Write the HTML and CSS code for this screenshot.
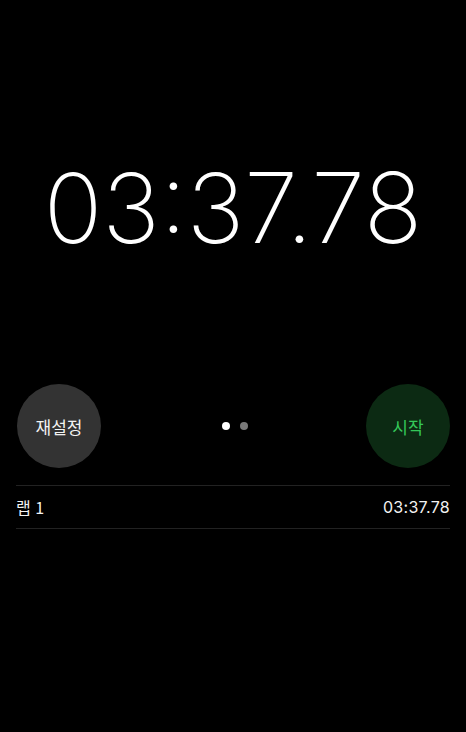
FILE: index.html
```html
<!DOCTYPE html>
<html lang="ko">
<head>
<meta charset="utf-8">
<link rel="stylesheet" href="styles.css">
</head>
<body>
<div class="screen">
  <div class="clock">03:37.78</div>
  <div class="controls">
    <div class="btn btn-reset"><span>재설정</span></div>
    <div class="dots"><span class="dot on"></span><span class="dot"></span></div>
    <div class="btn btn-start"><span>시작</span></div>
  </div>
  <div class="laps">
    <div class="lap"><span class="lap-name">랩 1</span><span class="lap-time">03:37.78</span></div>
  </div>
</div>
</body>
</html>
```
FILE: styles.css
```css
html, body {
  margin: 0;
  padding: 0;
  background: #000;
}
body {
  width: 466px;
  height: 732px;
  overflow: hidden;
  font-family: Inter, "Noto Sans CJK KR", sans-serif;
  color: #fff;
}
.screen {
  display: flex;
  flex-direction: column;
  padding: 0 16px;
}
.clock {
  display: flex;
  justify-content: center;
  font-family: Inter, sans-serif;
  font-weight: 200;
  font-size: 97px;
  letter-spacing: 0;
  line-height: 0;
  padding-top: 208px;
  margin-bottom: 176px;
}
.controls {
  display: flex;
  align-items: center;
  justify-content: space-between;
  margin-left: 1px;
  height: 84px;
}
.btn {
  width: 84px;
  height: 84px;
  border-radius: 50%;
  display: flex;
  align-items: center;
  justify-content: center;
  font-family: "Noto Sans CJK KR", sans-serif;
  font-size: 17px;
}
.btn-reset {
  background: #333333;
  color: #f2f2f2;
}
.btn-start {
  background: #0c2a13;
  color: #34c759;
}
.dots {
  display: flex;
  gap: 10px;
  margin-left: 2px;
}
.dot {
  width: 8px;
  height: 8px;
  border-radius: 50%;
  background: #7a7a7a;
}
.dot.on {
  background: #fff;
}
.laps {
  margin-top: 17px;
  border-top: 1px solid #222;
}
.lap {
  height: 42px;
  display: flex;
  align-items: center;
  justify-content: space-between;
  border-bottom: 1px solid #222;
  font-size: 16px;
  color: #f2f2f2;
}
.lap-name {
  font-family: "Noto Sans CJK KR", sans-serif;
}
.lap-time {
  font-family: Inter, sans-serif;
  letter-spacing: 0.3px;
}
```
